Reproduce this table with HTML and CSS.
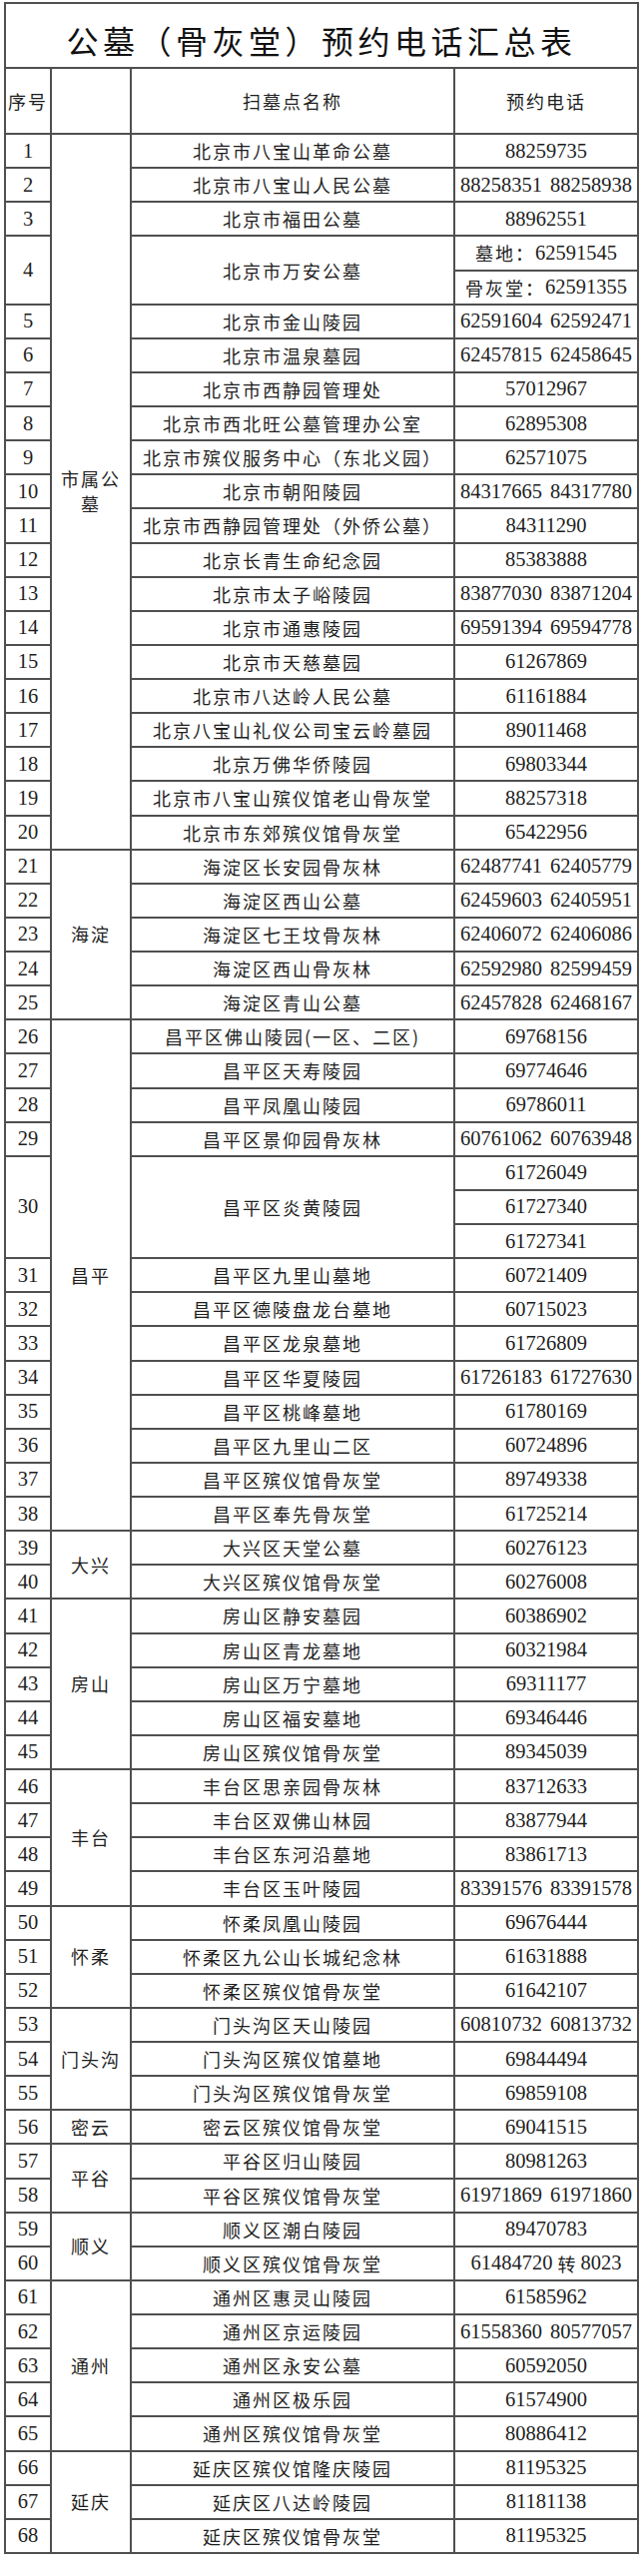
FILE: index.html
```html
<!DOCTYPE html>
<html lang="zh-CN">
<head>
<meta charset="utf-8">
<title>公墓（骨灰堂）预约电话汇总表</title>
<link rel="stylesheet" href="styles.css">
</head>
<body>
<div class="sheet">
  <div class="title">公墓（骨灰堂）预约电话汇总表</div>
  <div class="head">序号</div><div class="head"></div><div class="head">扫墓点名称</div><div class="head">预约电话</div>

  <div class="num">1</div><div class="cat r21">市属公墓</div><div class="name">北京市八宝山革命公墓</div><div class="tel">88259735</div>
  <div class="num">2</div><div class="name">北京市八宝山人民公墓</div><div class="tel">88258351 88258938</div>
  <div class="num">3</div><div class="name">北京市福田公墓</div><div class="tel">88962551</div>
  <div class="num r2">4</div><div class="name r2">北京市万安公墓</div><div class="tel"><span class="cjk">墓地：</span>62591545</div>
  <div class="tel"><span class="cjk">骨灰堂：</span>62591355</div>
  <div class="num">5</div><div class="name">北京市金山陵园</div><div class="tel">62591604 62592471</div>
  <div class="num">6</div><div class="name">北京市温泉墓园</div><div class="tel">62457815 62458645</div>
  <div class="num">7</div><div class="name">北京市西静园管理处</div><div class="tel">57012967</div>
  <div class="num">8</div><div class="name">北京市西北旺公墓管理办公室</div><div class="tel">62895308</div>
  <div class="num">9</div><div class="name">北京市殡仪服务中心（东北义园）</div><div class="tel">62571075</div>
  <div class="num">10</div><div class="name">北京市朝阳陵园</div><div class="tel">84317665 84317780</div>
  <div class="num">11</div><div class="name">北京市西静园管理处（外侨公墓）</div><div class="tel">84311290</div>
  <div class="num">12</div><div class="name">北京长青生命纪念园</div><div class="tel">85383888</div>
  <div class="num">13</div><div class="name">北京市太子峪陵园</div><div class="tel">83877030 83871204</div>
  <div class="num">14</div><div class="name">北京市通惠陵园</div><div class="tel">69591394 69594778</div>
  <div class="num">15</div><div class="name">北京市天慈墓园</div><div class="tel">61267869</div>
  <div class="num">16</div><div class="name">北京市八达岭人民公墓</div><div class="tel">61161884</div>
  <div class="num">17</div><div class="name">北京八宝山礼仪公司宝云岭墓园</div><div class="tel">89011468</div>
  <div class="num">18</div><div class="name">北京万佛华侨陵园</div><div class="tel">69803344</div>
  <div class="num">19</div><div class="name">北京市八宝山殡仪馆老山骨灰堂</div><div class="tel">88257318</div>
  <div class="num">20</div><div class="name">北京市东郊殡仪馆骨灰堂</div><div class="tel">65422956</div>

  <div class="num">21</div><div class="cat r5">海淀</div><div class="name">海淀区长安园骨灰林</div><div class="tel">62487741 62405779</div>
  <div class="num">22</div><div class="name">海淀区西山公墓</div><div class="tel">62459603 62405951</div>
  <div class="num">23</div><div class="name">海淀区七王坟骨灰林</div><div class="tel">62406072 62406086</div>
  <div class="num">24</div><div class="name">海淀区西山骨灰林</div><div class="tel">62592980 82599459</div>
  <div class="num">25</div><div class="name">海淀区青山公墓</div><div class="tel">62457828 62468167</div>

  <div class="num">26</div><div class="cat r15">昌平</div><div class="name">昌平区佛山陵园(一区、二区)</div><div class="tel">69768156</div>
  <div class="num">27</div><div class="name">昌平区天寿陵园</div><div class="tel">69774646</div>
  <div class="num">28</div><div class="name">昌平凤凰山陵园</div><div class="tel">69786011</div>
  <div class="num">29</div><div class="name">昌平区景仰园骨灰林</div><div class="tel">60761062 60763948</div>
  <div class="num r3">30</div><div class="name r3">昌平区炎黄陵园</div><div class="tel">61726049</div>
  <div class="tel">61727340</div>
  <div class="tel">61727341</div>
  <div class="num">31</div><div class="name">昌平区九里山墓地</div><div class="tel">60721409</div>
  <div class="num">32</div><div class="name">昌平区德陵盘龙台墓地</div><div class="tel">60715023</div>
  <div class="num">33</div><div class="name">昌平区龙泉墓地</div><div class="tel">61726809</div>
  <div class="num">34</div><div class="name">昌平区华夏陵园</div><div class="tel">61726183 61727630</div>
  <div class="num">35</div><div class="name">昌平区桃峰墓地</div><div class="tel">61780169</div>
  <div class="num">36</div><div class="name">昌平区九里山二区</div><div class="tel">60724896</div>
  <div class="num">37</div><div class="name">昌平区殡仪馆骨灰堂</div><div class="tel">89749338</div>
  <div class="num">38</div><div class="name">昌平区奉先骨灰堂</div><div class="tel">61725214</div>

  <div class="num">39</div><div class="cat r2">大兴</div><div class="name">大兴区天堂公墓</div><div class="tel">60276123</div>
  <div class="num">40</div><div class="name">大兴区殡仪馆骨灰堂</div><div class="tel">60276008</div>

  <div class="num">41</div><div class="cat r5">房山</div><div class="name">房山区静安墓园</div><div class="tel">60386902</div>
  <div class="num">42</div><div class="name">房山区青龙墓地</div><div class="tel">60321984</div>
  <div class="num">43</div><div class="name">房山区万宁墓地</div><div class="tel">69311177</div>
  <div class="num">44</div><div class="name">房山区福安墓地</div><div class="tel">69346446</div>
  <div class="num">45</div><div class="name">房山区殡仪馆骨灰堂</div><div class="tel">89345039</div>

  <div class="num">46</div><div class="cat r4">丰台</div><div class="name">丰台区思亲园骨灰林</div><div class="tel">83712633</div>
  <div class="num">47</div><div class="name">丰台区双佛山林园</div><div class="tel">83877944</div>
  <div class="num">48</div><div class="name">丰台区东河沿墓地</div><div class="tel">83861713</div>
  <div class="num">49</div><div class="name">丰台区玉叶陵园</div><div class="tel">83391576 83391578</div>

  <div class="num">50</div><div class="cat r3">怀柔</div><div class="name">怀柔凤凰山陵园</div><div class="tel">69676444</div>
  <div class="num">51</div><div class="name">怀柔区九公山长城纪念林</div><div class="tel">61631888</div>
  <div class="num">52</div><div class="name">怀柔区殡仪馆骨灰堂</div><div class="tel">61642107</div>

  <div class="num">53</div><div class="cat r3">门头沟</div><div class="name">门头沟区天山陵园</div><div class="tel">60810732 60813732</div>
  <div class="num">54</div><div class="name">门头沟区殡仪馆墓地</div><div class="tel">69844494</div>
  <div class="num">55</div><div class="name">门头沟区殡仪馆骨灰堂</div><div class="tel">69859108</div>

  <div class="num">56</div><div class="cat">密云</div><div class="name">密云区殡仪馆骨灰堂</div><div class="tel">69041515</div>

  <div class="num">57</div><div class="cat r2">平谷</div><div class="name">平谷区归山陵园</div><div class="tel">80981263</div>
  <div class="num">58</div><div class="name">平谷区殡仪馆骨灰堂</div><div class="tel">61971869 61971860</div>

  <div class="num">59</div><div class="cat r2">顺义</div><div class="name">顺义区潮白陵园</div><div class="tel">89470783</div>
  <div class="num">60</div><div class="name">顺义区殡仪馆骨灰堂</div><div class="tel">61484720<span class="cjk sep">转</span>8023</div>

  <div class="num">61</div><div class="cat r5">通州</div><div class="name">通州区惠灵山陵园</div><div class="tel">61585962</div>
  <div class="num">62</div><div class="name">通州区京运陵园</div><div class="tel">61558360 80577057</div>
  <div class="num">63</div><div class="name">通州区永安公墓</div><div class="tel">60592050</div>
  <div class="num">64</div><div class="name">通州区极乐园</div><div class="tel">61574900</div>
  <div class="num">65</div><div class="name">通州区殡仪馆骨灰堂</div><div class="tel">80886412</div>

  <div class="num">66</div><div class="cat r3">延庆</div><div class="name">延庆区殡仪馆隆庆陵园</div><div class="tel">81195325</div>
  <div class="num">67</div><div class="name">延庆区八达岭陵园</div><div class="tel">81181138</div>
  <div class="num">68</div><div class="name">延庆区殡仪馆骨灰堂</div><div class="tel">81195325</div>
</div>
</body>
</html>
```

FILE: styles.css
```css
html, body {
  margin: 0;
  padding: 0;
  background: #ffffff;
}

.sheet {
  display: grid;
  box-sizing: border-box;
  width: 636px;
  margin: 2px 0 0 4px;
  padding: 2px;
  gap: 2px;
  background: #4f4f4f;
  grid-template-columns: 44px 78px 322px 182px;
  grid-template-rows: 63px 64px;
  grid-auto-rows: 32.14px;
}

.sheet > div {
  background: #ffffff;
  display: flex;
  align-items: center;
  justify-content: center;
  text-align: center;
  color: #1e1e1e;
  font-family: "Noto Sans CJK SC", sans-serif;
  font-weight: 400;
  font-size: 18px;
  letter-spacing: 2px;
  white-space: nowrap;
  overflow: hidden;
}

.sheet > .title {
  grid-column: 1 / -1;
  font-size: 32px;
  font-weight: 400;
  letter-spacing: 4.5px;
  padding-top: 8px;
  box-sizing: border-box;
  color: #111111;
}

.sheet > .num,
.sheet > .tel {
  font-family: "Liberation Serif", "Noto Sans CJK SC", serif;
  font-weight: 400;
  font-size: 20.5px;
  letter-spacing: 0;
}

.sheet > .tel {
  word-spacing: 3px;
}

.tel .cjk {
  font-family: "Noto Sans CJK SC", sans-serif;
  font-weight: 400;
  font-size: 18px;
  letter-spacing: 2px;
  word-spacing: 0;
}

.tel .sep {
  letter-spacing: 0;
  margin: 0 5px;
}

.sheet > .cat {
  white-space: normal;
  line-height: 25px;
  padding: 0 4px;
  box-sizing: border-box;
}

.r2 { grid-row: span 2; }
.r3 { grid-row: span 3; }
.r4 { grid-row: span 4; }
.r5 { grid-row: span 5; }
.r15 { grid-row: span 15; }
.r21 { grid-row: span 21; }
```
